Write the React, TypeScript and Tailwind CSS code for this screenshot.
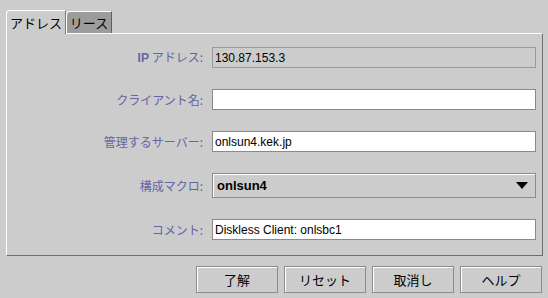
const jp = { fontFamily: '"Noto Sans CJK JP", "Liberation Sans", sans-serif' };
const latin = { fontFamily: '"Liberation Sans", "Noto Sans CJK JP", sans-serif' };

const Label = ({ children }: { children: React.ReactNode }) => (
  <div className="w-[196px] text-right text-[12px] text-[#6464a4] leading-none" style={jp}>
    {children}
  </div>
);

const Row = ({
  label,
  children,
  className = "",
}: {
  label: React.ReactNode;
  children: React.ReactNode;
  className?: string;
}) => (
  <div className={`flex items-center gap-[9px] ${className}`}>
    <Label>{label}</Label>
    {children}
  </div>
);

const TextField = ({ value }: { value: string }) => (
  <div
    className="w-[324px] h-[21px] bg-white border border-[#8a8a8a] flex items-center px-[2px] text-[12px] text-black"
    style={latin}
  >
    {value}
  </div>
);

const Button = ({ label }: { label: string }) => (
  <button
    className="w-[82px] h-[27px] bg-[#cccccc] border border-[#8c8c8c] shadow-[inset_1px_1px_0_#ffffff] text-[13px] text-black flex items-center justify-center"
    style={jp}
  >
    {label}
  </button>
);

export default function App() {
  return (
    <div className="w-[548px] h-[298px] bg-[#cccccc] overflow-hidden flex flex-col">
      {/* tabs */}
      <div className="flex items-end pl-[6px] pt-[9px] h-[33px]">
        <div
          className="relative z-10 w-[60px] h-[24px] -mb-px bg-[#cccccc] border-t border-l border-white rounded-tl-[4px] border-r border-r-[#7a7a7a] flex items-center justify-center text-[13px] text-black"
          style={jp}
        >
          アドレス
        </div>
        <div
          className="w-[46px] h-[22px] bg-[#9c9c9c] border-t border-l border-white rounded-tl-[4px] border-r border-r-[#5e5e5e] flex items-center justify-center text-[13px] text-black"
          style={jp}
        >
          リース
        </div>
      </div>

      {/* panel */}
      <div className="ml-[6px] w-[537px] h-[223px] border-t border-l border-white border-r border-b border-r-[#6e6e6e] border-b-[#6e6e6e] flex flex-col pt-[13px]">
        <Row
          label={
            <>
              <span className="font-bold" style={latin}>
                IP
              </span>{" "}
              アドレス:
            </>
          }
        >
          <div
            className="w-[324px] h-[21px] border border-[#9a9a9a] flex items-center px-[2px] text-[12px] text-black"
            style={latin}
          >
            130.87.153.3
          </div>
        </Row>
        <Row label="クライアント名:" className="mt-[21px]">
          <TextField value="" />
        </Row>
        <Row label="管理するサーバー:" className="mt-[21px]">
          <TextField value="onlsun4.kek.jp" />
        </Row>
        <Row label="構成マクロ:" className="mt-[21px]">
          <div className="w-[324px] h-[25px] border border-[#8a8a8a] shadow-[inset_1px_1px_0_#ffffff] flex items-center justify-between pl-[4px] pr-[7px]">
            <span className="text-[13px] font-bold text-black" style={latin}>
              onlsun4
            </span>
            <svg width="12" height="7" viewBox="0 0 12 7">
              <path d="M0 0 H12 L6 7 Z" fill="#000" />
            </svg>
          </div>
        </Row>
        <Row label="コメント:" className="mt-[21px]">
          <TextField value="Diskless Client: onlsbc1" />
        </Row>
      </div>

      {/* buttons */}
      <div className="flex gap-[6px] pl-[196px] pt-[10px]">
        <Button label="了解" />
        <Button label="リセット" />
        <Button label="取消し" />
        <Button label="ヘルプ" />
      </div>
    </div>
  );
}
